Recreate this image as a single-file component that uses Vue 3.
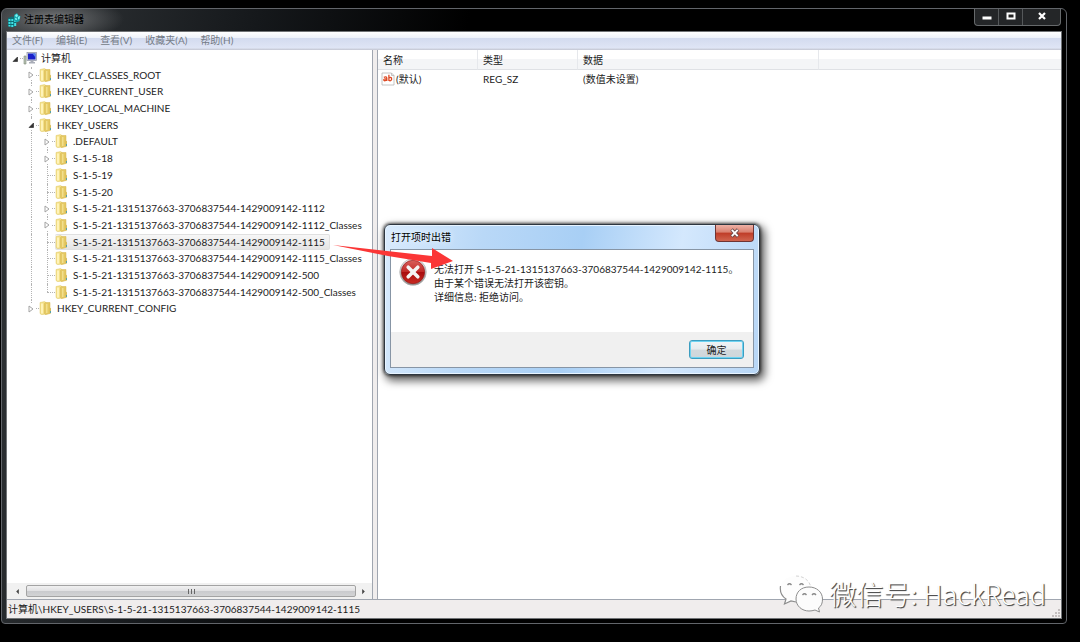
<script setup>
import { ref } from 'vue'

const menus = ['文件(F)', '编辑(E)', '查看(V)', '收藏夹(A)', '帮助(H)']

const users = 'S-1-5-21-1315137663-3706837544-1429009142-'
const nodes = [
  { name: '计算机', level: 0, state: 'open' },
  { name: 'HKEY_CLASSES_ROOT', level: 1, state: 'closed' },
  { name: 'HKEY_CURRENT_USER', level: 1, state: 'closed' },
  { name: 'HKEY_LOCAL_MACHINE', level: 1, state: 'closed' },
  { name: 'HKEY_USERS', level: 1, state: 'open' },
  { name: '.DEFAULT', level: 2, state: 'closed' },
  { name: 'S-1-5-18', level: 2, state: 'closed' },
  { name: 'S-1-5-19', level: 2, state: 'leaf' },
  { name: 'S-1-5-20', level: 2, state: 'leaf' },
  { name: users + '1112', level: 2, state: 'closed' },
  { name: users + '1112_Classes', level: 2, state: 'closed' },
  { name: users + '1115', level: 2, state: 'leaf' },
  { name: users + '1115_Classes', level: 2, state: 'leaf' },
  { name: users + '500', level: 2, state: 'leaf' },
  { name: users + '500_Classes', level: 2, state: 'leaf', last: true },
  { name: 'HKEY_CURRENT_CONFIG', level: 1, state: 'closed', last: true }
]
const selected = ref(users + '1115')
</script>

<template>
  <div class="desktop">
    <main class="window">
      <header class="titlebar">
        <svg class="app-icon" viewBox="0 0 14 16" aria-hidden="true">
          <path d="M1 6l4-1.500L9 6v8l-4 1.500L1 14z" fill="#0f6d74" />
          <path d="M1.500 7h2v2h-2zM4.300 7h2v2h-2zM1.500 10h2v2h-2zM4.300 10h2v2h-2zM1.500 13h2v1.500h-2zM4.300 13h2v2h-2zM7.200 11h2v3h-2zM7.200 8h2v2h-2z" fill="#3fe0e4" />
          <path d="M7 3l3-2 1.500 2.500L13.500 4l-1 5-3 1.500L7 8z" fill="#17a3aa" />
          <path d="M8 3l2-1 1 2-2 1.500zM11 5l2-1-.5 3-1.500.5zM8 6l2 .5v1.500l-2-.5z" fill="#7df3f3" />
        </svg>
        <h1 class="title">注册表编辑器</h1>
        <div class="controls">
          <button type="button" aria-label="最小化">
            <svg viewBox="0 0 12 10"><rect x="1.500" y="5.500" width="9" height="3" fill="#fff" /></svg>
          </button>
          <button type="button" aria-label="最大化">
            <svg viewBox="0 0 12 10"><rect x="2.500" y="2.500" width="7" height="5" fill="#222" stroke="#fff" stroke-width="2" /></svg>
          </button>
          <button type="button" class="wide" aria-label="关闭">
            <svg viewBox="0 0 12 10"><path d="M3 2l6 6M9 2l-6 6" stroke="#fff" stroke-width="2.200" /></svg>
          </button>
        </div>
      </header>

      <div class="client">
        <nav class="menubar">
          <button v-for="m in menus" :key="m" type="button">{{ m }}</button>
        </nav>

        <div class="panes">
          <section class="tree-pane">
            <ul class="tree" role="tree">
              <li
                v-for="n in nodes"
                :key="n.name"
                role="treeitem"
                :aria-selected="n.name === selected"
                :class="['node', 'level-' + n.level, n.state, { last: n.last }]"
              >
                <span v-if="n.level > 0" class="indent"></span>
                <span v-if="n.level > 1" class="guide"></span>
                <span class="branch">
                  <button v-if="n.state !== 'leaf'" type="button" class="toggle" :aria-label="n.name">
                    <svg v-if="n.state === 'open'" viewBox="0 0 8 8"><path d="M6.500 2v4.500H2z" fill="#333" stroke="#222" stroke-width=".6" /></svg>
                    <svg v-else viewBox="0 0 8 8"><path d="M2 1l4 3-4 3z" fill="#fff" stroke="#a4a4a4" /></svg>
                  </button>
                </span>
                <button type="button" class="key" :class="{ selected: n.name === selected }" @click="selected = n.name">
                  <svg v-if="n.level === 0" class="icon" viewBox="0 0 14 14" aria-hidden="true">
                    <path d="M1 5h2v8H1z" fill="#b9c4b4" stroke="#7d8a78" stroke-width=".6" />
                    <rect x="4" y="1.500" width="9.500" height="8" fill="#d7dae2" stroke="#8b90a0" stroke-width=".7" />
                    <rect x="5" y="2.500" width="7.500" height="6" fill="#1c22c8" />
                    <path d="M9.500 2.500h3v4z" fill="#5a8cf0" />
                    <path d="M7.500 9.500h3V11H12v1.500H6V11h1.500z" fill="#a9adb8" />
                  </svg>
                  <svg v-else class="icon" viewBox="0 0 14 14" aria-hidden="true">
                    <path d="M1 1.500L5.500.600l1.500.9v11.500l-4.500.7L1 12.500z" fill="#f3e08a" stroke="#e0c969" stroke-width=".5" />
                    <path d="M5.500 2.500l1-1h4.500v11L6.500 13.700l-1-1.200z" fill="#e5c963" stroke="#d6b54e" stroke-width=".5" />
                    <path d="M2 2.500h2v10H2z" fill="#fff3b8" />
                    <path d="M7 3h1.500v9H7z" fill="#f2df8d" />
                    <path d="M10.500 6.500l1.500.7v5.300h-1.500z" fill="#d9bd5c" />
                    <rect x="11" y="10" width="1" height="2" fill="#58a0a8" />
                  </svg>
                  <span>{{ n.name }}</span>
                </button>
              </li>
            </ul>
            <div class="scrollbar">
              <button type="button" aria-label="向左滚动"><svg viewBox="0 0 8 8"><path d="M5.500 1v6l-3-3z" fill="#444" /></svg></button>
              <div class="thumb"><i></i><i></i><i></i></div>
              <button type="button" aria-label="向右滚动"><svg viewBox="0 0 8 8"><path d="M2.500 1v6l3-3z" fill="#444" /></svg></button>
            </div>
          </section>

          <section class="list-pane">
            <table>
              <colgroup><col class="c1" /><col class="c1" /><col class="c3" /><col /></colgroup>
              <thead>
                <tr><th>名称</th><th>类型</th><th>数据</th><th></th></tr>
              </thead>
              <tbody>
                <tr>
                  <td>
                    <span class="value">
                      <svg viewBox="0 0 14 14" aria-hidden="true">
                        <path d="M1 1h9.500L13 3.500V13H1z" fill="#fff" stroke="#b5b5b5" stroke-width=".8" />
                        <path d="M10.500 1v2.500H13" fill="#ddd" stroke="#aaa" stroke-width=".6" />
                        <g fill="none" stroke="#de4a24" stroke-width="1.300">
                          <path d="M2.800 5.400Q5.500 4.200 5.800 6V9M5.800 6.700Q2.600 6.600 2.700 8 3.400 9.600 5.800 7.800" />
                          <path d="M7.900 2.800V9M7.900 6Q9.500 4.700 10.500 6 11 8.700 9 8.800L7.900 8.200" />
                        </g>
                      </svg>
                      <span>(默认)</span>
                    </span>
                  </td>
                  <td>REG_SZ</td>
                  <td>(数值未设置)</td>
                  <td></td>
                </tr>
              </tbody>
            </table>
          </section>
        </div>

        <footer class="statusbar">
          <span>计算机\HKEY_USERS\{{ selected }}</span>
          <svg viewBox="0 0 9 9" aria-hidden="true"><path d="M6 1h2M6 4h2M3 4h2M6 7h2M3 7h2M0 7h2" stroke="#c4bfbf" stroke-width="2" /></svg>
        </footer>
      </div>
    </main>

    <section class="dialog" role="dialog" aria-labelledby="dialog-title">
      <header class="dialog-title">
        <h2 id="dialog-title">打开项时出错</h2>
        <button type="button" class="close" aria-label="关闭">
          <svg viewBox="0 0 12 10"><path d="M2.500 1.500l6.500 7M9 1.500l-6.500 7" stroke="#6b4a4a" stroke-width="3.400" /><path d="M2.800 1.800l5.900 6.400M8.700 1.800L2.800 8.200" stroke="#fff" stroke-width="1.800" /></svg>
        </button>
      </header>
      <div class="dialog-body">
        <div class="message">
          <svg class="error" viewBox="0 0 28 28" aria-hidden="true">
            <defs>
              <linearGradient id="ring" x2="0" y2="1"><stop stop-color="#f4f4f4" /><stop offset="1" stop-color="#8d8d8d" /></linearGradient>
              <linearGradient id="red" x2="0" y2="1"><stop stop-color="#d8605c" /><stop offset=".48" stop-color="#c22a28" /><stop offset=".52" stop-color="#a90d0f" /><stop offset="1" stop-color="#c92b22" /></linearGradient>
            </defs>
            <circle cx="14" cy="14" r="13.300" fill="url(#ring)" stroke="#aaa" stroke-width=".6" />
            <circle cx="14" cy="14" r="11.700" fill="url(#red)" stroke="#8f1414" stroke-width=".6" />
            <path d="M9.200 9.200l9.600 9.600M18.800 9.200l-9.600 9.600" stroke="#f4f4f4" stroke-width="3.600" stroke-linecap="round" />
          </svg>
          <p>无法打开 {{ selected }}。<br />由于某个错误无法打开该密钥。<br />详细信息: 拒绝访问。</p>
        </div>
        <div class="actions"><button type="button">确定</button></div>
      </div>
    </section>

    <svg class="arrow" viewBox="0 0 120 30" aria-hidden="true">
      <path d="M0 2L99 13V5L120 18 98 26V20L55 13z" fill="#fb3636" />
    </svg>

    <div class="watermark">
      <svg viewBox="0 0 46 40" aria-hidden="true">
        <path d="M17 2C7 2 1 8 1 15c0 5 3 8 6 10l-1.500 5L12 27c2 .6 4 1 6 1 9 0 15-6 15-13S27 2 17 2z" fill="#fdfdfd" />
        <path d="M1.500 12C.500 19 4 23 7 25l-1.500 5L12 27l5 1" fill="none" stroke="#8d8d8d" stroke-width="1.200" />
        <path d="M17 2c7 0 13 4 14.500 10" fill="none" stroke="#c8c8c8" stroke-width=".8" stroke-dasharray="3 2" />
        <path d="M30 13c-8 0-13 5-13 12s6 12 13 12c2 0 4-.3 6-1l4.500 2-1-4c3-2 4-5 4-9 0-7-6-12-13.500-12z" fill="#fcfcfc" stroke="#8d8d8d" stroke-width="1" />
        <path d="M8.500 11q2-2.500 4 0M20.500 11q2-2.500 4 0M23.500 21q2-2.500 4 0M33 21q2-2.500 4 0" fill="none" stroke="#888" stroke-width="1.300" />
      </svg>
      <span>微信号: HackRead</span>
    </div>
  </div>
</template>

<style>
body { margin: 0; background: #000; }
</style>

<style scoped>
* { box-sizing: border-box; }
.desktop {
  position: relative;
  min-height: 100vh;
  display: flex;
  padding: 8px 13px 18px 1px;
  background: #000;
  overflow: hidden;
  font: 10px/14px Lato, "Noto Sans CJK SC", sans-serif;
  color: #1c1c1c;
}
button { font: inherit; color: inherit; border: 0; padding: 0; margin: 0; background: none; }
h1, h2, p, ul { margin: 0; padding: 0; font-size: 10px; font-weight: 400; }
svg { display: block; }

.window {
  flex: 1;
  display: flex;
  flex-direction: column;
  padding: 0 5px 5px 5px;
  border: 1px solid #62656a;
  border-radius: 6px 6px 4px 4px;
  background:
    radial-gradient(ellipse 70px 22px at 52px 10px, #77797b 0, #66686a99 50%, transparent 100%),
    linear-gradient(100deg, #33373a 0, #15181b 22%, #000 40%, #000 100%);
}
.titlebar { display: flex; height: 23px; }
.app-icon { width: 14px; height: 16px; margin: 3px 3px 0 0; }
.title { line-height: 21px; color: #000; }
.controls {
  display: flex;
  height: 17px;
  margin-left: auto;
  border: 1px solid #66696b;
  border-top: 0;
  border-radius: 0 0 4px 4px;
  background: #242628;
}
.controls button { display: flex; justify-content: center; width: 24px; padding-top: 2px; border-right: 1px solid #55585a; }
.controls .wide { width: 37px; border-right: 0; }
.controls svg { width: 12px; height: 10px; }

.client { flex: 1; display: flex; flex-direction: column; background: #f0eded; outline: 1px solid #707376; }
.menubar {
  display: flex;
  gap: 13px;
  height: 18px;
  padding: 0 0 2px 5px;
  background: linear-gradient(#fff 0, #eef2fa 33%, #d3dbef 34%, #dfe5f5 88%, #c2c5d0 100%);
  color: #747b86;
}
.panes { flex: 1; display: flex; gap: 4px; background: #f0eded; border-bottom: 1px solid #a0a6b0; }
.tree-pane { width: 366px; display: flex; flex-direction: column; background: #fff; border-right: 1px solid #a0a6b0; overflow: hidden; }
.tree { display: grid; grid-template-rows: repeat(16, 1fr); height: 267px; list-style: none; margin-bottom: auto; }
.node { display: flex; align-items: stretch; min-height: 0; padding-left: 1px; }
.indent { width: 15px; }
.guide, .branch { position: relative; flex: none; width: 16px; }
.level-0 .branch { width: 15px; }
.guide::before, .branch::before {
  content: "";
  position: absolute;
  left: 8px;
  top: 0;
  bottom: 0;
  border-left: 1px dotted #b4b4b4;
}
.level-0 .branch::before { display: none; }
.last .branch::before { bottom: 50%; }
.branch::after {
  content: "";
  position: absolute;
  left: 8px;
  right: 0;
  top: 8px;
  border-top: 1px dotted #b4b4b4;
}
.toggle { position: relative; z-index: 1; display: block; width: 8px; height: 10px; margin: 3px 0 0 4px; padding-top: 1px; background: #fff; }
.toggle svg { width: 8px; height: 8px; }
.level-0 .toggle { margin-left: 3px; }
.key { display: flex; align-items: center; gap: 4px; height: 16px; padding: 0 4px 0 0; border: 1px solid transparent; border-left: 0; border-radius: 2px; white-space: nowrap; }
.key.selected { background: linear-gradient(#f7f7f7, #e4e4e4); border-color: #e0e0e0; }
.icon { width: 14px; height: 14px; }

.scrollbar { display: flex; height: 16px; padding: 2px 1px; background: #f1f1f1; }
.scrollbar button { display: grid; place-items: center; width: 18px; }
.scrollbar button:last-child { width: 15px; }
.scrollbar svg { width: 7px; height: 7px; }
.thumb {
  flex: 1;
  display: flex;
  justify-content: center;
  align-items: center;
  gap: 2px;
  border: 1px solid #a3a3a3;
  border-radius: 2px;
  background: linear-gradient(#f1f1f1 0, #e2e2e4 45%, #c9cacd 50%, #d2d3d5 100%);
}
.thumb i { width: 1px; height: 5px; background: #666; }

.list-pane { flex: 1; background: #fff; border-left: 1px solid #a0a6b0; }
table { width: 100%; table-layout: fixed; border-collapse: separate; border-spacing: 0; }
.c1 { width: 100px; }
.c3 { width: 241px; }
th, td { padding: 0 0 0 5px; text-align: left; font-weight: 400; }
th { height: 20px; background: linear-gradient(#fff 45%, #f4f5f7 46%); border-right: 1px solid #e6e8ec; border-bottom: 1px solid #dfe1e5; }
th:last-child { border-right: 0; }
td { height: 18px; }
.value { display: flex; align-items: center; gap: 1px; margin-left: -2px; }
.value svg { width: 14px; height: 14px; }

.statusbar { display: flex; justify-content: space-between; align-items: end; height: 18px; padding-left: 1px; }
.statusbar span { line-height: 18px; }
.statusbar svg { width: 9px; height: 9px; }

.dialog {
  position: absolute;
  left: 384px;
  top: 224px;
  width: 376px;
  padding: 0 5px 6px 5px;
  border: 1px solid #2d3640;
  border-radius: 6px;
  background: linear-gradient(100deg, #d9ebfd 0, #b9d8f7 25%, #a8cff5 50%, #d4e8fd 75%, #b7d6f6 100%);
  box-shadow: inset 0 0 0 1px #e8f4ff, 0 0 3px 1px #0009, 3px 4px 8px 2px #0009;
}
.dialog-title { display: flex; justify-content: space-between; height: 24px; padding-left: 1px; }
.dialog-title h2 { line-height: 25px; color: #000; text-shadow: 0 0 6px #fff; }
.close {
  display: grid;
  place-items: center;
  width: 39px;
  height: 17px;
  border: 1px solid #6f3433;
  border-top: 0;
  border-radius: 0 0 4px 4px;
  background: linear-gradient(#eeb1a6 0, #d9806f 45%, #bf3c27 50%, #d0654f 100%);
}
.close svg { width: 12px; height: 10px; }
.dialog-body { border: 1px solid #8795a5; background: #fff; }
.message { display: flex; gap: 7px; height: 82px; padding: 8px; }
.error { flex: none; width: 28px; height: 28px; }
.message p { padding-top: 4px; white-space: nowrap; }
.actions { display: flex; justify-content: flex-end; padding: 8px 9px; background: #f0f0f0; }
.actions button {
  width: 55px;
  height: 19px;
  border: 1px solid #3c9dc0;
  border-radius: 3px;
  background: linear-gradient(#f0f4f6 0, #e6ebee 48%, #d2d9dd 52%, #cfd6da 100%);
  box-shadow: inset 0 0 0 1px #6ed3f2;
}

.arrow { position: absolute; left: 333px; top: 243px; width: 120px; height: 30px; }
.watermark {
  position: absolute;
  right: 34px;
  bottom: 28px;
  display: flex;
  align-items: center;
  gap: 5px;
  color: #fff;
  font: 300 27px/40px "Noto Sans CJK SC", sans-serif;
  text-shadow: 1px 1px 1px #444, 1px 1px 0 #999;
  white-space: nowrap;
}
.watermark svg { width: 46px; height: 40px; }
</style>
